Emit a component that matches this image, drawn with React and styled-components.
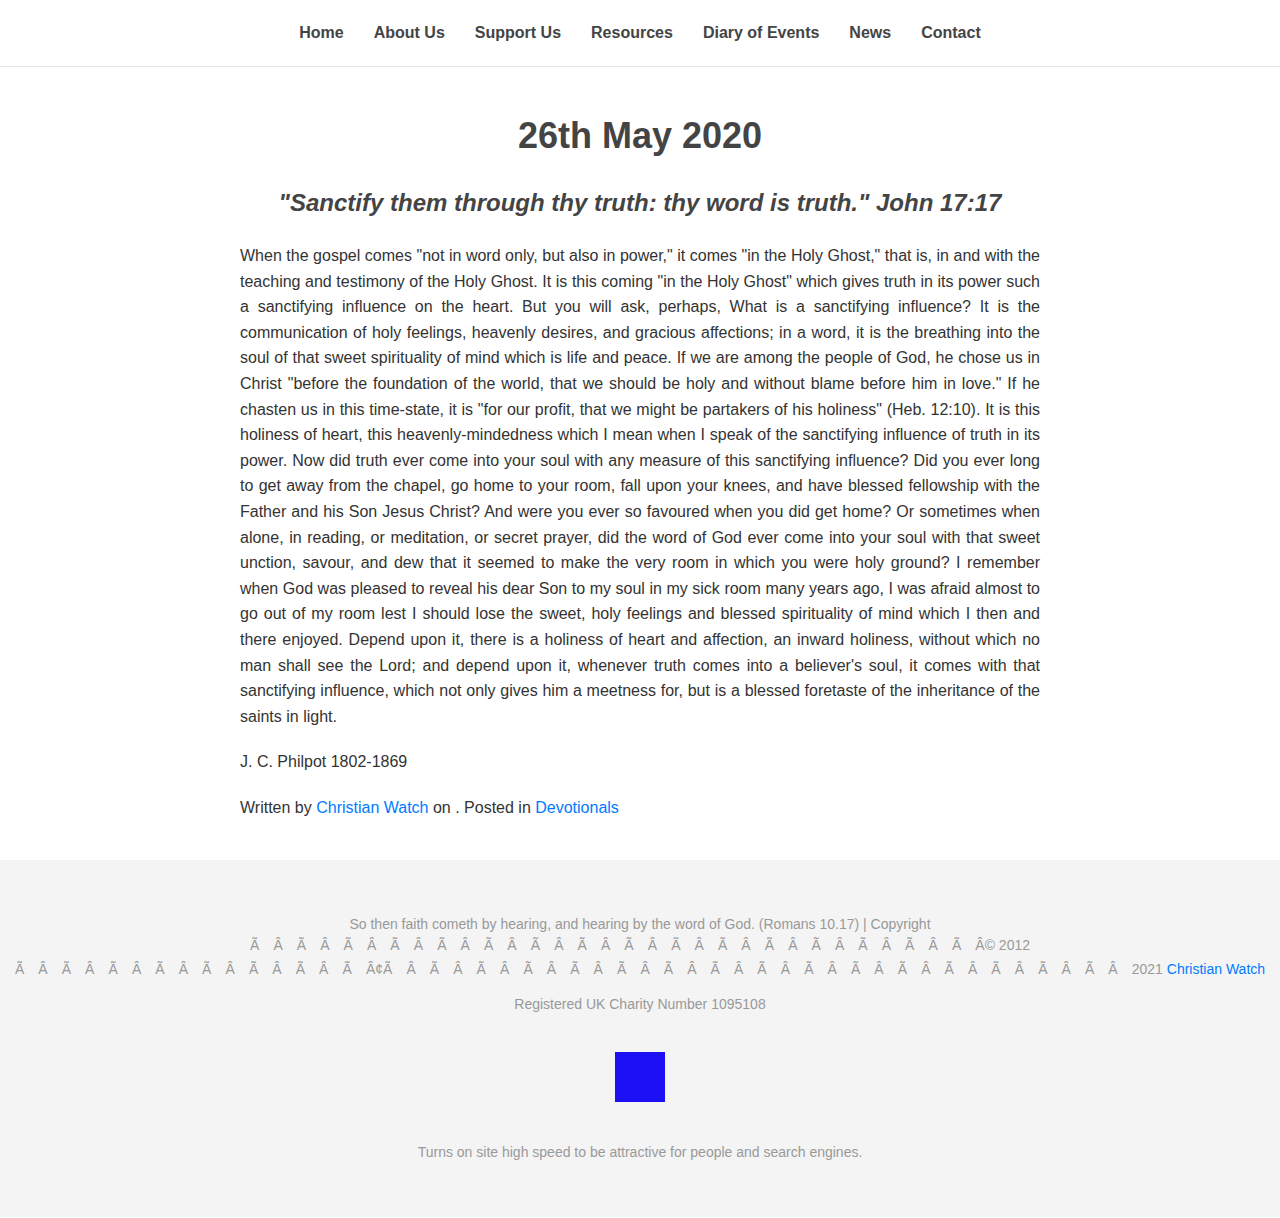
import React from "react";
import styled, { createGlobalStyle } from "styled-components";

const GlobalStyle = createGlobalStyle`
  body {
    margin: 0;
    background: #fff;
    font-family: "Liberation Sans", Arial, sans-serif;
  }
`;

const navItems = [
  "Home",
  "About Us",
  "Support Us",
  "Resources",
  "Diary of Events",
  "News",
  "Contact",
];

const body =
  'When the gospel comes "not in word only, but also in power," it comes "in the Holy Ghost," that is, in and with the teaching and testimony of the Holy Ghost. It is this coming "in the Holy Ghost" which gives truth in its power such a sanctifying influence on the heart. But you will ask, perhaps, What is a sanctifying influence? It is the communication of holy feelings, heavenly desires, and gracious affections; in a word, it is the breathing into the soul of that sweet spirituality of mind which is life and peace. If we are among the people of God, he chose us in Christ "before the foundation of the world, that we should be holy and without blame before him in love." If he chasten us in this time-state, it is "for our profit, that we might be partakers of his holiness" (Heb. 12:10). It is this holiness of heart, this heavenly-mindedness which I mean when I speak of the sanctifying influence of truth in its power. Now did truth ever come into your soul with any measure of this sanctifying influence? Did you ever long to get away from the chapel, go home to your room, fall upon your knees, and have blessed fellowship with the Father and his Son Jesus Christ? And were you ever so favoured when you did get home? Or sometimes when alone, in reading, or meditation, or secret prayer, did the word of God ever come into your soul with that sweet unction, savour, and dew that it seemed to make the very room in which you were holy ground? I remember when God was pleased to reveal his dear Son to my soul in my sick room many years ago, I was afraid almost to go out of my room lest I should lose the sweet, holy feelings and blessed spirituality of mind which I then and there enjoyed. Depend upon it, there is a holiness of heart and affection, an inward holiness, without which no man shall see the Lord; and depend upon it, whenever truth comes into a believer\'s soul, it comes with that sanctifying influence, which not only gives him a meetness for, but is a blessed foretaste of the inheritance of the saints in light.';

const pairs = (n) => Array(n).fill("Ã Â").join(" ");

const lineTwo = pairs(15) + " Ã ";
const lineThree = pairs(7) + " Ã Â¢Ã " + Array(15).fill("Â Ã").join(" ") + " Â ";

const App = () => {
  return (
    <>
      <GlobalStyle />
      <Header>
        <Nav>
          {navItems.map((item) => (
            <NavLink key={item} href="#">
              {item}
            </NavLink>
          ))}
        </Nav>
      </Header>

      <Main>
        <Title>26th May 2020</Title>
        <Verse>"Sanctify them through thy truth: thy word is truth." John 17:17</Verse>
        <Text>{body}</Text>
        <Text>J. C. Philpot 1802-1869</Text>
        <Text>
          Written by <BlueLink href="#">Christian Watch</BlueLink> on . Posted in{" "}
          <BlueLink href="#">Devotionals</BlueLink>
        </Text>
      </Main>

      <Footer>
        <Copyright>
          <FooterLine>
            So then faith cometh by hearing, and hearing by the word of God. (Romans 10.17) | Copyright
          </FooterLine>
          <FooterLine>
            <Garbled>{lineTwo}</Garbled>Â© 2012
          </FooterLine>
          <FooterLine $gap>
            <Garbled>{lineThree}</Garbled>2021 <BlueLink href="#">Christian Watch</BlueLink>
          </FooterLine>
        </Copyright>
        <FooterNote>Registered UK Charity Number 1095108</FooterNote>
        <Badge />
        <FooterNote $top={40}>
          Turns on site high speed to be attractive for people and search engines.
        </FooterNote>
      </Footer>
    </>
  );
};

const Header = styled.header`
  height: 66px;
  border-bottom: 1px solid #e5e5e5;
  display: flex;
  align-items: center;
  justify-content: center;
`;

const Nav = styled.nav`
  display: flex;
  gap: 30px;
`;

const NavLink = styled.a`
  font-size: 16px;
  font-weight: 700;
  color: #444;
  text-decoration: none;
`;

const Main = styled.main`
  width: 800px;
  margin: 0 auto;
  padding: 47px 0 40px;
  color: #333;
`;

const Title = styled.h1`
  margin: 0;
  text-align: center;
  font-size: 36px;
  line-height: 44px;
  font-weight: 700;
  color: #444;
`;

const Verse = styled.h2`
  margin: 30px 0 0;
  text-align: center;
  font-size: 24px;
  line-height: 30px;
  font-style: italic;
  font-weight: 700;
  color: #444;
`;

const Text = styled.p`
  margin: 20px 0 0;
  font-size: 16px;
  line-height: 25.6px;
  text-align: justify;
  &:nth-of-type(1) {
    margin-top: 25px;
  }
`;

const BlueLink = styled.a`
  color: #007bff;
  text-decoration: none;
`;

const Footer = styled.footer`
  background: #f4f4f4;
  padding: 54px 15px 54px;
  display: flex;
  flex-direction: column;
  align-items: center;
  color: #999;
  font-size: 14px;
`;

const Copyright = styled.div`
  text-align: center;
`;

const FooterLine = styled.div`
  line-height: 21px;
  white-space: nowrap;
  margin-top: ${(p) => (p.$gap ? "3px" : "0")};
`;

const Garbled = styled.span`
  word-spacing: 10.17px;
`;

const FooterNote = styled.p`
  margin: ${(p) => p.$top || 14}px 0 0;
  line-height: 21px;
  text-align: center;
`;

const Badge = styled.div`
  width: 50px;
  height: 50px;
  margin-top: 37px;
  background: #1e10f5;
`;

export default App;
